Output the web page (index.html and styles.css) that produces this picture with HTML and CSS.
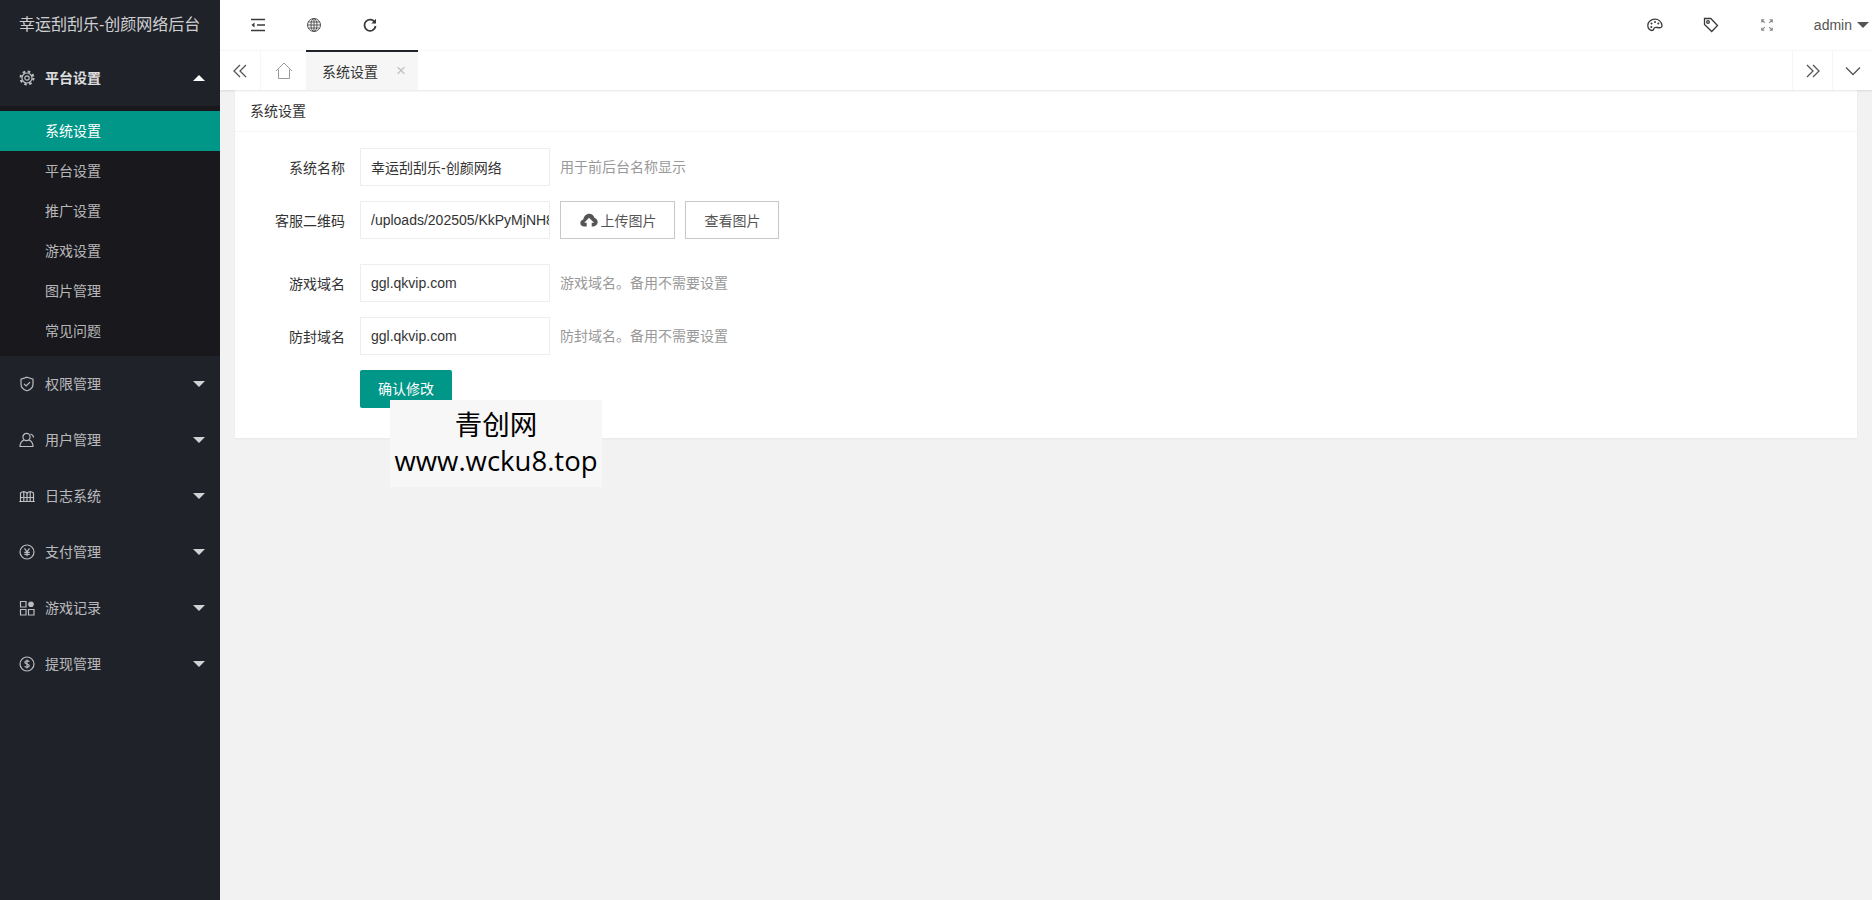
FILE: index.html
```html
<!DOCTYPE html>
<html lang="zh-CN">
<head>
<meta charset="utf-8">
<title>系统设置</title>
<link rel="stylesheet" href="styles.css">
</head>
<body>
<div class="app">
  <aside class="side">
    <div class="logo">幸运刮刮乐-创颜网络后台</div>
    <ul class="nav">
      <li class="group open">
        <a class="group-head"><svg class="ico" viewBox="0 0 16 16"><circle cx="8" cy="8" r="6.500" class="teeth"/><circle cx="8" cy="8" r="5"/><circle cx="8" cy="8" r="2.200"/></svg><span>平台设置</span><i class="caret up"></i></a>
        <ul class="sub">
          <li class="active">系统设置</li>
          <li>平台设置</li>
          <li>推广设置</li>
          <li>游戏设置</li>
          <li>图片管理</li>
          <li>常见问题</li>
        </ul>
      </li>
      <li class="group"><a class="group-head"><svg class="ico" viewBox="0 0 16 16"><path d="M8 1.200l6 2v5c0 3.300-2.700 5.500-6 6.600-3.300-1.100-6-3.300-6-6.600v-5z"/><path d="M5 7.800l2.200 2.200 3.800-3.800"/></svg><span>权限管理</span><i class="caret"></i></a></li>
      <li class="group"><a class="group-head"><svg class="ico" viewBox="0 0 16 16"><circle cx="7.500" cy="5" r="3.600"/><path d="M5 8C2.500 9 1 11 1 14.500h13C14 11 12.500 9 10 8"/><path d="M11.500 2c1.700.5 3 1.800 3 3.500"/></svg><span>用户管理</span><i class="caret"></i></a></li>
      <li class="group"><a class="group-head"><svg class="ico" viewBox="0 0 16 16"><path d="M1.500 13.500V5c2-1.800 4.500-1.800 6.500 0 2-1.800 4.500-1.800 6.500 0v8.500"/><path d="M8 5v8.500M.3 13.500h15.400M4.800 4v9.500M11.200 4v9.500M1.500 9.500h13"/></svg><span>日志系统</span><i class="caret"></i></a></li>
      <li class="group"><a class="group-head"><svg class="ico" viewBox="0 0 16 16"><circle cx="8" cy="8" r="7"/><path d="M5.500 4.300L8 7.800l2.500-3.500M8 7.800v4.500M5.300 8.300h5.400M5.300 10.300h5.400"/></svg><span>支付管理</span><i class="caret"></i></a></li>
      <li class="group"><a class="group-head"><svg class="ico" viewBox="0 0 16 16"><path d="M1.500 1.500h5.500v5.500H1.500zM1.500 9.500h5.500V15H1.500zM9.500 9.500H15V15H9.500z"/><circle cx="12" cy="4.200" r="2.800" class="fill"/></svg><span>游戏记录</span><i class="caret"></i></a></li>
      <li class="group"><a class="group-head"><svg class="ico" viewBox="0 0 16 16"><circle cx="8" cy="8" r="7"/><path d="M10.300 5.700C9.800 4.700 6 4.300 5.800 6.200 5.600 8.300 10.500 7.600 10.300 9.900 10.100 11.800 6.200 11.300 5.700 10.200M8 3.500v9"/></svg><span>提现管理</span><i class="caret"></i></a></li>
    </ul>
  </aside>

  <div class="main">
    <header class="top">
      <div class="top-left">
        <a class="top-btn"><svg class="tico" viewBox="0 0 16 16"><path d="M1 2.500h14M7 8h8M1 13.500h14"/><path d="M4.500 5.500v5L1.500 8z" class="fill"/></svg></a>
        <a class="top-btn"><svg class="tico globe" viewBox="0 0 16 16"><circle cx="8" cy="8" r="6.500"/><ellipse cx="8" cy="8" rx="3" ry="6.500"/><path d="M1.500 8h13M2.300 5h11.400M2.300 11h11.400M8 1.500v13"/></svg></a>
        <a class="top-btn"><svg class="tico thick" viewBox="0 0 16 16"><path d="M13.200 6A5.600 5.600 0 1 0 13.600 9"/><path d="M14 1.800v4.700H9.300z" class="fill"/></svg></a>
      </div>
      <div class="top-right">
        <a class="top-btn"><svg class="tico" viewBox="0 0 16 16"><path d="M8 2.200C4 2.200 .8 5 .8 8.500c0 2.700 2 5 4.200 5 2 0 1.500-2 2.500-2.800 1.300-1 3.300.3 5.500 0 1.400-.2 2.200-1.200 2-2.400C14.400 5 11.700 2.200 8 2.200z"/><circle cx="4.500" cy="6.500" r="1" class="fill"/><circle cx="8" cy="5" r="1" class="fill"/><circle cx="11.300" cy="6.500" r="1" class="fill"/><circle cx="4.300" cy="10" r="1" class="fill"/></svg></a>
        <a class="top-btn"><svg class="tico" viewBox="0 0 16 16"><path d="M1.500 1.500h6.300l6.700 7-5.800 6-7.200-7z"/><circle cx="5" cy="5" r="1.300"/></svg></a>
        <a class="top-btn"><svg class="tico light" viewBox="0 0 16 16"><path d="M2 2l3.500 3.500M2 5V2h3M14 2l-3.500 3.500M14 5V2h-3M2 14l3.500-3.500M2 11v3h3M14 14l-3.500-3.500M14 11v3h-3"/></svg></a>
        <a class="user">admin<i class="caret dark"></i></a>
      </div>
    </header>

    <div class="tabs">
      <a class="tab-ctl"><svg class="tab-ico" viewBox="0 0 16 16"><path d="M8 2L2 8l6 6M14 2L8 8l6 6"/></svg></a>
      <a class="tab-home"><svg class="tab-home-ico" viewBox="0 0 18 18"><path d="M1 9l8-8 8 8M3.500 7.500V16.500h11V7.500"/></svg></a>
      <a class="tab-current"><span>系统设置</span><span class="tab-x">×</span></a>
      <div class="tab-fill"></div>
      <a class="tab-ctl edge"><svg class="tab-ico" viewBox="0 0 16 16"><path d="M2 2l6 6-6 6M8 2l6 6-6 6"/></svg></a>
      <a class="tab-ctl edge"><svg class="tab-ico" viewBox="0 0 16 16"><path d="M1 4.500l7 7 7-7"/></svg></a>
    </div>

    <main class="content">
      <section class="card">
        <div class="card-head">系统设置</div>
        <form class="card-body">
          <div class="row">
            <label class="lbl">系统名称</label>
            <input class="inp" value="幸运刮刮乐-创颜网络" readonly>
            <span class="hint">用于前后台名称显示</span>
          </div>
          <div class="row row-upload">
            <label class="lbl">客服二维码</label>
            <input class="inp" value="/uploads/202505/KkPyMjNH8Qd2pXv.png" readonly>
            <a class="btn"><svg class="cloud" viewBox="0 0 18 14"><path d="M4.200 13.500C1.900 13.500.3 12 .3 10c0-1.800 1.300-3.200 3-3.500C3.800 3 6.200.7 9.200.7c2.700 0 4.900 1.900 5.400 4.400 1.800.4 3.100 2.100 3.100 4 0 2.400-1.900 4.400-4.300 4.400h-1.700V9.800h2.400L9 4.800l-4.700 5h2.400v3.700z"/></svg>上传图片</a>
            <a class="btn btn-view">查看图片</a>
          </div>
          <div class="row">
            <label class="lbl">游戏域名</label>
            <input class="inp" value="ggl.qkvip.com" readonly>
            <span class="hint">游戏域名。备用不需要设置</span>
          </div>
          <div class="row">
            <label class="lbl">防封域名</label>
            <input class="inp" value="ggl.qkvip.com" readonly>
            <span class="hint">防封域名。备用不需要设置</span>
          </div>
          <div class="row row-submit">
            <a class="submit">确认修改</a>
          </div>
        </form>
      </section>
    </main>
  </div>
</div>
<div class="mark">青创网<br>www.wcku8.top</div>
</body>
</html>
```
FILE: styles.css
```css
* { box-sizing: border-box; }
html, body { margin: 0; height: 100%; overflow: hidden; }
body {
  font-family: "Liberation Sans", "Noto Sans CJK SC", sans-serif;
  font-size: 14px;
  color: #333;
  background: #f2f2f2;
}
ul { list-style: none; margin: 0; padding: 0; }
.app { display: flex; height: 900px; }

/* sidebar */
.side { width: 220px; flex: none; background: #20222a; color: rgba(255,255,255,.7); }
.logo { height: 50px; line-height: 50px; padding-left: 19px; font-size: 16px; color: rgba(255,255,255,.8); white-space: nowrap; }
.group-head { display: flex; align-items: center; height: 56px; padding-left: 19px; padding-right: 15px; }
.group-head span { flex: 1; margin-left: 10px; padding-bottom: 2px; }
.group.open .group-head span { color: #fff; font-weight: 700; opacity: .85; }
.ico { width: 16px; height: 16px; fill: none; stroke: currentColor; stroke-width: 1.200; }
.ico .fill { fill: currentColor; stroke: none; }
.ico .teeth { stroke-width: 2; stroke-dasharray: 2.550 2.550; }
.caret { width: 0; height: 0; border: 6px solid transparent; border-top-color: rgba(255,255,255,.8); border-bottom-width: 0; }
.caret.up { border-top-width: 0; border-bottom-width: 6px; border-top-color: transparent; border-bottom-color: #fff; }
.sub { padding: 5px 0; background: #18181d; }
.sub li { height: 40px; line-height: 40px; padding-left: 45px; color: rgba(255,255,255,.7); }
.sub li.active { background: #009688; color: #fff; }

/* header */
.main { flex: 1; min-width: 0; display: flex; flex-direction: column; }
.top { height: 50px; flex: none; background: #fff; display: flex; justify-content: space-between; align-items: center; }
.top-left { display: flex; padding-left: 10px; }
.top-right { display: flex; align-items: center; padding-right: 3px; }
.top-btn { width: 56px; height: 50px; display: flex; align-items: center; justify-content: center; }
.tico { width: 16px; height: 16px; fill: none; stroke: #3a3a3a; stroke-width: 1.300; }
.tico .fill { fill: #3a3a3a; stroke: none; }
.tico.thick { stroke-width: 1.800; }
.tico.light { width: 14px; height: 14px; stroke: #888; }
.tico.globe { stroke: #555; stroke-width: 1; }
.user { display: flex; align-items: center; margin-left: 19px; gap: 5px; color: #555; }
.caret.dark { border-top-color: #555; }

/* tabs */
.tabs { height: 40px; flex: none; display: flex; background: #fff; box-shadow: 0 1px 2px rgba(0,0,0,.1); border-top: 1px solid #f6f6f6; position: relative; }
.tab-ctl { width: 40px; display: flex; align-items: center; justify-content: center; }
.tab-ctl.edge { border-left: 1px solid #f6f6f6; }
.tab-ico { width: 16px; height: 16px; fill: none; stroke: #555; stroke-width: 1.300; }
.tab-home { width: 46px; display: flex; align-items: center; justify-content: center; border-left: 1px solid #f6f6f6; }
.tab-home-ico { width: 18px; height: 18px; fill: none; stroke: #999; stroke-width: 1; }
.tab-current { width: 112px; margin-top: -1px; background: #f6f6f6; border-top: 2px solid #20222a; display: flex; align-items: center; padding-left: 16px; color: #333; }
.tab-x { margin-left: 18px; color: #c2c2c2; font-size: 17px; }
.tab-fill { flex: 1; }

/* content */
.content { flex: 1; padding: 0 15px; }
.card { background: #fff; box-shadow: 0 1px 2px rgba(0,0,0,.05); }
.card-head { height: 42px; line-height: 42px; padding-left: 15px; border-bottom: 1px solid #f6f6f6; color: #333; }
.card-body { padding: 16px 15px 30px; }
.row { display: flex; align-items: center; height: 38px; margin-bottom: 15px; }
.row-upload { margin-bottom: 25px; }
.row-submit { margin-bottom: 0; padding-left: 110px; }
.lbl { width: 95px; text-align: right; color: #333; margin-right: 15px; white-space: nowrap; }
.inp { width: 190px; height: 38px; padding: 0 0 0 10px; border: 1px solid #eee; background: #fff; font: inherit; color: #333; outline: none; }
.hint { margin-left: 10px; padding-bottom: 2px; color: #999; }
.btn { display: inline-flex; align-items: center; justify-content: center; height: 38px; width: 115px; margin-left: 10px; border: 1px solid #c9c9c9; color: #555; background: #fff; padding-left: 1px; }
.btn-view { width: 94px; }
.cloud { width: 18px; height: 14px; margin-right: 3px; fill: #555; }
.submit { display: inline-flex; align-items: center; justify-content: center; width: 92px; height: 38px; padding-bottom: 2px; background: #009688; color: #fff; border-radius: 2px; }

/* floating watermark */
.mark { position: absolute; left: 390px; top: 400px; width: 212px; height: 87px; padding-top: 7px; background: #f7f7f7; color: #000; font-family: "Open Sans", "Noto Sans CJK SC", sans-serif; font-size: 27.500px; line-height: 36px; text-align: center; white-space: nowrap; }
```
